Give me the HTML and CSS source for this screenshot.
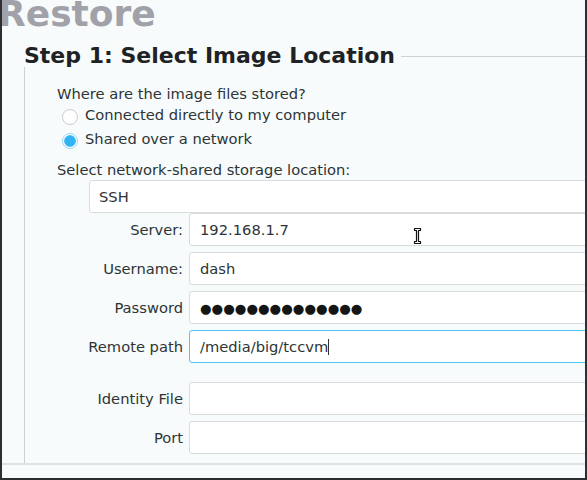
FILE: index.html
```html
<!DOCTYPE html>
<html>
<head>
<meta charset="utf-8">
<link rel="stylesheet" href="styles.css">
</head>
<body>
<div class="window">
  <div class="title">Restore</div>
  <div class="step-head">
    <h2 class="step-title">Step 1: Select Image Location</h2>
    <span class="rule"></span>
  </div>
  <div class="frame">
    <div class="question">Where are the image files stored?</div>
    <div class="radio"><span class="dot"></span>Connected directly to my computer</div>
    <div class="radio"><span class="dot on"></span>Shared over a network</div>
    <div class="question sel">Select network-shared storage location:</div>
    <div class="combo">SSH</div>
    <div class="form">
      <div class="label">Server:</div>
      <div class="entry">192.168.1.7</div>
      <div class="label">Username:</div>
      <div class="entry">dash</div>
      <div class="label">Password</div>
      <div class="entry"><span class="dots">●●●●●●●●●●●●●●</span></div>
      <div class="label">Remote path</div>
      <div class="entry focus">/media/big/tccvm<span class="caret"></span></div>
      <div class="spacer"></div>
      <div class="label">Identity File</div>
      <div class="entry"></div>
      <div class="label">Port</div>
      <div class="entry"></div>
    </div>
  </div>
  <div class="sep"></div>
  <svg class="ibeam" width="9" height="18" viewBox="0 0 9 18">
    <path d="M1.5 1.5 H7.5 V3.5 H5.5 V14.5 H7.5 V16.5 H1.5 V14.5 H3.5 V3.5 H1.5 Z" fill="#ffffff" stroke="#111111" stroke-width="1.2" stroke-linejoin="round"/>
  </svg>
</div>
</body>
</html>
```

FILE: styles.css
```css
html, body {
  margin: 0;
  padding: 0;
  background: #f7fbfb;
}

.window {
  position: relative;
  width: 587px;
  height: 480px;
  box-sizing: border-box;
  border: 2px solid #2b2f31;
  border-top: none;
  overflow: hidden;
  background: #f7fbfb;
  font-family: "DejaVu Sans", sans-serif;
  font-size: 14.7px;
  color: #2e3436;
}

.title {
  font-weight: 700;
  font-size: 36px;
  line-height: 36px;
  margin-top: -4px;
  margin-left: -4px;
  color: #a1a1a9;
}

.step-head {
  display: flex;
  align-items: flex-start;
  margin-top: 12px;
  padding-left: 22px;
}

.step-title {
  margin: 0;
  font-size: 22px;
  line-height: 23px;
  font-weight: 700;
  color: #1e2224;
  white-space: nowrap;
}

.rule {
  flex: 1;
  margin-top: 12px;
  margin-left: 6px;
  border-top: 1px solid #cfd3d3;
}

.frame {
  margin-left: 22px;
  margin-right: -40px;
  border-left: 1px solid #cdd1d1;
  padding-top: 18px;
  padding-bottom: 9px;
}

.question {
  padding-left: 32px;
  line-height: 18px;
}

.question.sel {
  margin-top: 10px;
}

.radio {
  display: flex;
  align-items: center;
  height: 24px;
  line-height: 18px;
  padding-left: 37px;
}

.dot {
  width: 16px;
  height: 16px;
  box-sizing: border-box;
  border-radius: 50%;
  border: 1px solid #c9cdcd;
  background: #ffffff;
  margin-right: 7px;
  margin-top: 4px;
  flex: none;
}

.dot.on {
  border-color: #9ad9f3;
  background: radial-gradient(circle, #33b4f2 0, #33b4f2 5.3px, #ffffff 6.3px);
}

.combo {
  margin-top: 1px;
  margin-left: 64px;
  height: 33px;
  box-sizing: border-box;
  border: 1px solid #d8dcdc;
  border-radius: 3px;
  background: #ffffff;
  padding-left: 9px;
  line-height: 31px;
}

.form {
  display: grid;
  grid-template-columns: 158px 1fr;
  column-gap: 6px;
  row-gap: 6px;
}

.label {
  text-align: right;
  line-height: 33px;
  white-space: nowrap;
}

.entry {
  height: 33px;
  box-sizing: border-box;
  border: 1px solid #d8dcdc;
  border-radius: 3px;
  background: #ffffff;
  padding-left: 10px;
  line-height: 31px;
  white-space: nowrap;
}

.entry.focus {
  border-color: #4cc6f4;
}

.dots {
  font-size: 13.3px;
  color: #141616;
}

.caret {
  display: inline-block;
  width: 1px;
  height: 16px;
  background: #2e3436;
  vertical-align: -3px;
}

.spacer {
  grid-column: 1 / -1;
  height: 7px;
}

.sep {
  height: 2px;
  background: #e0e3e3;
}

.ibeam {
  position: absolute;
  left: 411px;
  top: 227px;
}
```
